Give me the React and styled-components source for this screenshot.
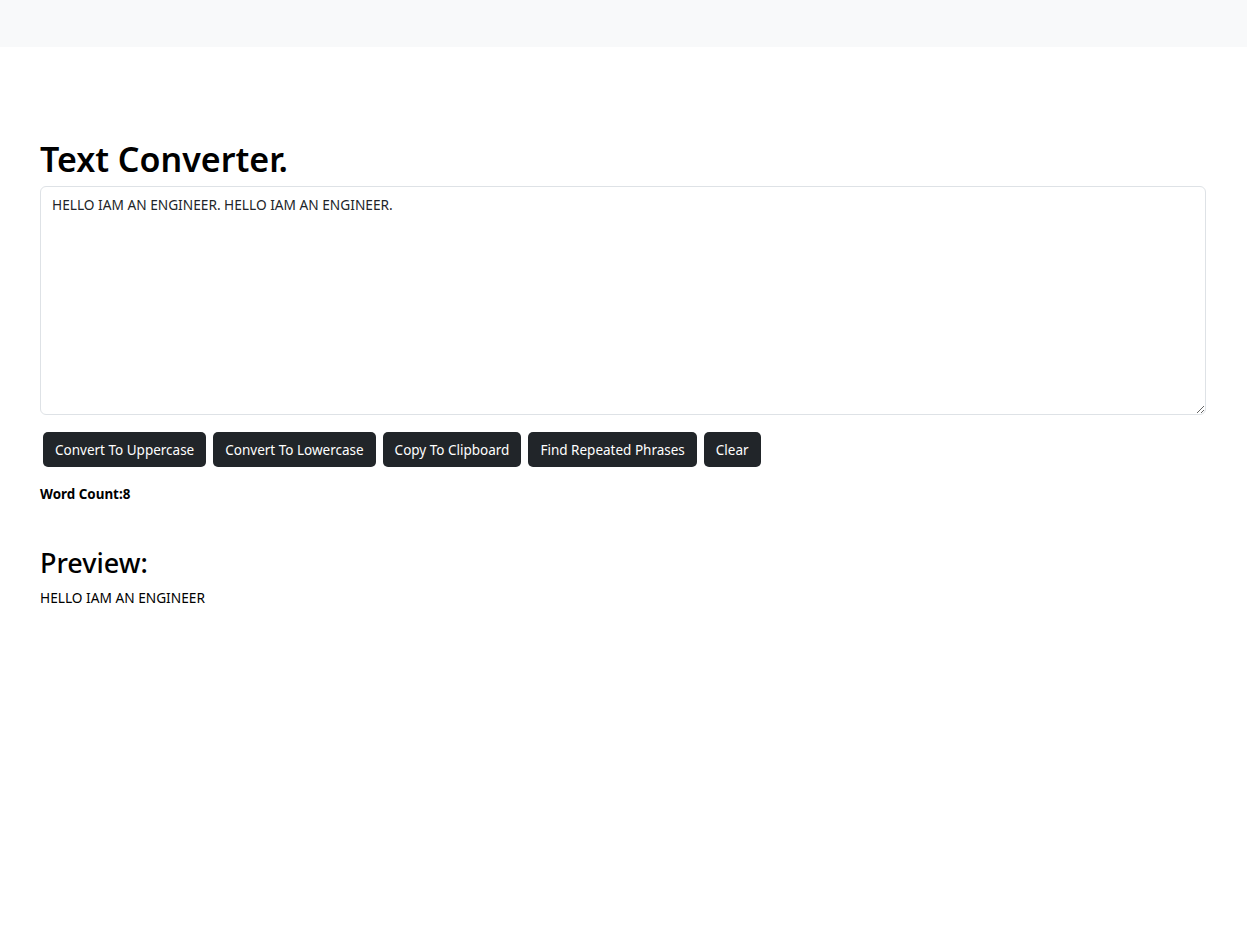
import React, { useState } from "react";
import styled, { createGlobalStyle } from "styled-components";

const FONT = `"Noto Sans", "Open Sans", sans-serif`;

const Global = createGlobalStyle`
  html, body { margin: 0; padding: 0; background: #fff; }
  body {
    font-family: ${FONT};
    color: #212529;
  }
  * { box-sizing: border-box; }
`;

const Nav = styled.nav`
  height: 47px;
  background: #f8f9fa;
`;

const AlertSlot = styled.div`
  height: 50px;
`;

const Container = styled.main`
  padding: 42px 41px 16px 40px;
`;

const Title = styled.h1`
  margin: 0 0 7px;
  font-size: 34px;
  font-weight: 600;
  line-height: 40px;
  color: #000;
`;

const TextArea = styled.textarea`
  display: block;
  width: 100%;
  height: 229px;
  padding: 8px 11px;
  border: 1px solid #dee2e6;
  border-radius: 6px;
  font-family: ${FONT};
  font-size: 13.7px;
  line-height: 1.5;
  color: #212529;
  resize: vertical;
  outline: none;
`;

const ButtonRow = styled.div`
  display: flex;
  flex-wrap: wrap;
  gap: 7px;
  padding-left: 3px;
  margin-top: 17px;
`;

const Button = styled.button`
  height: 35px;
  padding: 0 12px;
  border: none;
  border-radius: 5px;
  background: #212529;
  color: #fff;
  font-family: ${FONT};
  font-size: 13.5px;
  cursor: pointer;
`;

const WordCount = styled.p`
  margin: 18px 0 0;
  font-size: 13.4px;
  font-weight: 700;
  line-height: 18px;
  color: #000;
`;

const PreviewTitle = styled.h2`
  margin: 44px 0 10px;
  font-size: 27px;
  font-weight: 500;
  line-height: 32px;
  color: #000;
`;

const PreviewText = styled.p`
  margin: 0;
  font-size: 13.7px;
  line-height: 18px;
  color: #000;
`;

export default function App() {
  const [text, setText] = useState("HELLO IAM AN ENGINEER. HELLO IAM AN ENGINEER.");
  return (
    <>
      <Global />
      <Nav />
      <AlertSlot />
      <Container>
        <Title>Text Converter.</Title>
        <TextArea value={text} onChange={(e) => setText(e.target.value)} />
        <ButtonRow>
          <Button>Convert To Uppercase</Button>
          <Button>Convert To Lowercase</Button>
          <Button>Copy To Clipboard</Button>
          <Button>Find Repeated Phrases</Button>
          <Button>Clear</Button>
        </ButtonRow>
        <WordCount>Word Count:8</WordCount>
        <PreviewTitle>Preview:</PreviewTitle>
        <PreviewText>HELLO IAM AN ENGINEER</PreviewText>
      </Container>
    </>
  );
}
